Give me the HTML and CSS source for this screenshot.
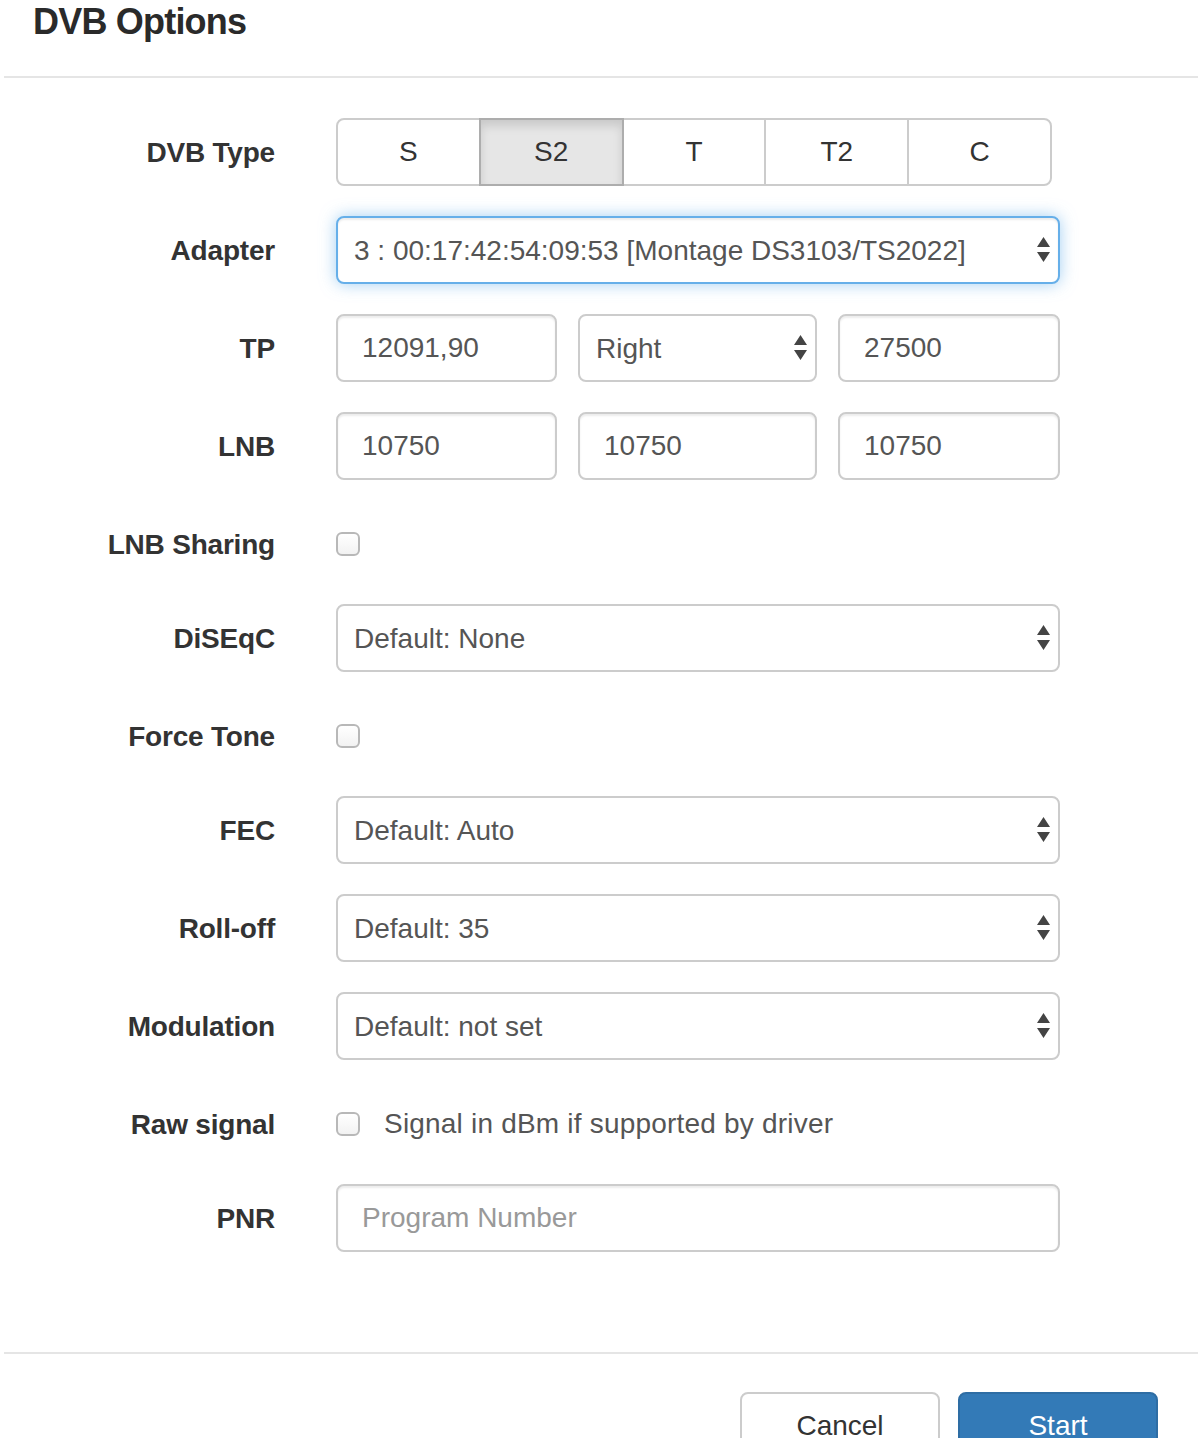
FILE: index.html
```html
<!DOCTYPE html>
<html lang="en">
<head>
<meta charset="utf-8">
<title>DVB Options</title>
<link rel="stylesheet" href="styles.css">
</head>
<body>
<div class="modal">
  <div class="modal-header">
    <h4 class="modal-title">DVB Options</h4>
  </div>
  <div class="modal-body">
    <form class="form">
      <div class="row">
        <label class="lbl">DVB Type</label>
        <div class="btn-group">
          <button type="button" class="seg">S</button>
          <button type="button" class="seg active">S2</button>
          <button type="button" class="seg">T</button>
          <button type="button" class="seg">T2</button>
          <button type="button" class="seg">C</button>
        </div>
      </div>
      <div class="row">
        <label class="lbl">Adapter</label>
        <div class="sel-wrap">
          <select class="ctl sel focus"><option>3 : 00:17:42:54:09:53 [Montage DS3103/TS2022]</option></select>
          <span class="arrows"><svg width="13" height="26" viewBox="0 0 13 26"><path d="M6.5 0 L13 10 L0 10 Z M0 15 L13 15 L6.5 25 Z" fill="#444"/></svg></span>
        </div>
      </div>
      <div class="row">
        <label class="lbl">TP</label>
        <div class="triple">
          <input class="ctl inp w1" type="text" value="12091,90">
          <div class="sel-wrap w2">
            <select class="ctl sel"><option>Right</option></select>
            <span class="arrows"><svg width="13" height="26" viewBox="0 0 13 26"><path d="M6.5 0 L13 10 L0 10 Z M0 15 L13 15 L6.5 25 Z" fill="#444"/></svg></span>
          </div>
          <input class="ctl inp w3" type="text" value="27500">
        </div>
      </div>
      <div class="row">
        <label class="lbl">LNB</label>
        <div class="triple">
          <input class="ctl inp w1" type="text" value="10750">
          <input class="ctl inp w2" type="text" value="10750">
          <input class="ctl inp w3" type="text" value="10750">
        </div>
      </div>
      <div class="row check-row">
        <label class="lbl">LNB Sharing</label>
        <div class="check"><input type="checkbox" class="cb"></div>
      </div>
      <div class="row">
        <label class="lbl">DiSEqC</label>
        <div class="sel-wrap">
          <select class="ctl sel"><option>Default: None</option></select>
          <span class="arrows"><svg width="13" height="26" viewBox="0 0 13 26"><path d="M6.5 0 L13 10 L0 10 Z M0 15 L13 15 L6.5 25 Z" fill="#444"/></svg></span>
        </div>
      </div>
      <div class="row check-row">
        <label class="lbl">Force Tone</label>
        <div class="check"><input type="checkbox" class="cb"></div>
      </div>
      <div class="row">
        <label class="lbl">FEC</label>
        <div class="sel-wrap">
          <select class="ctl sel"><option>Default: Auto</option></select>
          <span class="arrows"><svg width="13" height="26" viewBox="0 0 13 26"><path d="M6.5 0 L13 10 L0 10 Z M0 15 L13 15 L6.5 25 Z" fill="#444"/></svg></span>
        </div>
      </div>
      <div class="row">
        <label class="lbl">Roll-off</label>
        <div class="sel-wrap">
          <select class="ctl sel"><option>Default: 35</option></select>
          <span class="arrows"><svg width="13" height="26" viewBox="0 0 13 26"><path d="M6.5 0 L13 10 L0 10 Z M0 15 L13 15 L6.5 25 Z" fill="#444"/></svg></span>
        </div>
      </div>
      <div class="row">
        <label class="lbl">Modulation</label>
        <div class="sel-wrap">
          <select class="ctl sel"><option>Default: not set</option></select>
          <span class="arrows"><svg width="13" height="26" viewBox="0 0 13 26"><path d="M6.5 0 L13 10 L0 10 Z M0 15 L13 15 L6.5 25 Z" fill="#444"/></svg></span>
        </div>
      </div>
      <div class="row check-row">
        <label class="lbl">Raw signal</label>
        <label class="check"><input type="checkbox" class="cb"><span class="check-text">Signal in dBm if supported by driver</span></label>
      </div>
      <div class="row last">
        <label class="lbl">PNR</label>
        <input class="ctl inp" type="text" placeholder="Program Number">
      </div>
    </form>
  </div>
  <div class="modal-footer">
    <button type="button" class="btn btn-default">Cancel</button>
    <button type="button" class="btn btn-primary">Start</button>
  </div>
</div>
</body>
</html>
```

FILE: styles.css
```css
html, body {
  margin: 0;
  padding: 0;
  background: #fff;
  overflow: hidden;
  height: 1438px;
}
body {
  font-family: "Liberation Sans", Arial, sans-serif;
  color: #333;
}
.modal {
  margin-left: 4px;
}
.modal-header {
  padding: 2px 29px 0;
  height: 74px;
  border-bottom: 2px solid #e5e5e5;
}
.modal-title {
  margin: 0;
  font-size: 36px;
  line-height: 40px;
  font-weight: bold;
  letter-spacing: -0.8px;
  color: #2a2a2a;
}
.modal-body {
  padding: 40px 0 100px;
}
.form {
  display: flex;
  flex-direction: column;
  gap: 30px;
}
.row {
  display: grid;
  grid-template-columns: 271px 724px;
  column-gap: 61px;
  height: 68px;
  align-items: start;
}
.row.check-row {
  height: 64px;
}
.lbl {
  text-align: right;
  font-weight: bold;
  font-size: 28px;
  line-height: 69px;
  letter-spacing: -0.2px;
  color: #333;
}
.btn-group {
  display: flex;
  width: 716px;
  height: 68px;
}
.seg {
  flex: 1 1 0;
  height: 68px;
  margin: 0;
  margin-left: -2px;
  border: 2px solid #ccc;
  background: #fff;
  color: #333;
  font-family: "Liberation Sans", Arial, sans-serif;
  font-size: 28px;
  padding: 0;
  border-radius: 0;
}
.seg:first-child {
  margin-left: 0;
  border-radius: 8px 0 0 8px;
}
.seg:last-child {
  border-radius: 0 8px 8px 0;
}
.seg.active {
  background: #e6e6e6;
  border-color: #adadad;
  box-shadow: inset 0 6px 10px rgba(0, 0, 0, 0.125);
  position: relative;
}
.ctl {
  box-sizing: border-box;
  height: 68px;
  width: 724px;
  border: 2px solid #ccc;
  border-radius: 8px;
  background: #fff;
  font-family: "Liberation Sans", Arial, sans-serif;
  font-size: 28px;
  color: #555;
  margin: 0;
  box-shadow: inset 0 2px 2px rgba(0, 0, 0, 0.075);
  outline: none;
}
.inp {
  padding: 0 24px;
}
.inp::placeholder {
  color: #999;
}
.sel {
  appearance: none;
  -webkit-appearance: none;
  padding: 0 40px 0 16px;
  box-shadow: none;
}
.sel.focus {
  border-color: #66afe9;
  box-shadow: inset 0 2px 2px rgba(0, 0, 0, 0.075), 0 0 16px rgba(102, 175, 233, 0.6);
}
.sel-wrap {
  position: relative;
  width: 724px;
  height: 68px;
}
.sel-wrap .sel {
  width: 100%;
}
.arrows {
  position: absolute;
  right: 10px;
  top: 21px;
  width: 13px;
  height: 26px;
  pointer-events: none;
}
.arrows svg {
  display: block;
}
.triple {
  display: flex;
  gap: 21px;
  width: 724px;
}
.triple .w1 {
  width: 221px;
}
.triple .w2 {
  width: 239px;
}
.triple .w3 {
  width: 222px;
}
.triple .sel-wrap.w2 .sel {
  width: 239px;
}
.check {
  display: flex;
  align-items: center;
  height: 68px;
  font-size: 28px;
  color: #555;
}
.cb {
  appearance: none;
  -webkit-appearance: none;
  box-sizing: border-box;
  width: 24px;
  height: 24px;
  margin: 0;
  border: 2px solid #b8b8b8;
  border-radius: 6px;
  background: linear-gradient(#fff, #f2f2f2);
}
.check-text {
  margin-left: 24px;
  letter-spacing: 0.2px;
}
.modal-footer {
  border-top: 2px solid #e5e5e5;
  padding: 38px 40px 0 0;
  display: flex;
  justify-content: flex-end;
  gap: 18px;
}
.btn {
  box-sizing: border-box;
  width: 200px;
  height: 68px;
  border-radius: 8px;
  border: 2px solid #ccc;
  font-family: "Liberation Sans", Arial, sans-serif;
  font-size: 28px;
  padding: 0;
  margin: 0;
}
.btn-default {
  background: #fff;
  color: #333;
}
.btn-primary {
  background: #337ab7;
  border-color: #2e6da4;
  color: #fff;
}
```
